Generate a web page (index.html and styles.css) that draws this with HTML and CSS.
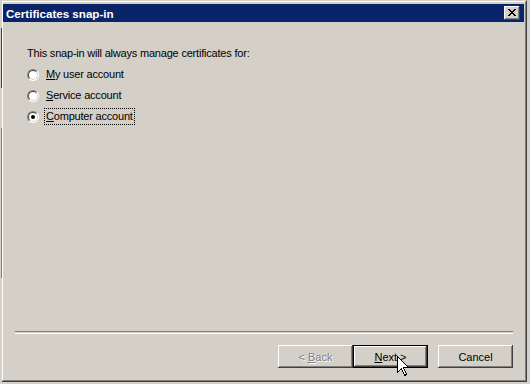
FILE: index.html
```html
<!DOCTYPE html>
<html>
<head>
<meta charset="utf-8">
<link rel="stylesheet" href="styles.css">
</head>
<body>
<div class="backdrop-edge">
  <div class="edge-line edge-a"></div>
  <div class="edge-line edge-b"></div>
  <div class="edge-line edge-c"></div>
</div>
<div class="window">
  <div class="frame">
    <div class="titlebar">
      <span class="title">Certificates snap-in</span>
      <button class="close" aria-label="Close">
        <svg width="8" height="7" viewBox="0 0 8 7" shape-rendering="crispEdges">
          <path d="M0 0h2v1h-2zM6 0h2v1h-2zM1 1h2v1h-2zM5 1h2v1h-2zM2 2h4v1h-4zM3 3h2v1h-2zM2 4h4v1h-4zM1 5h2v1h-2zM5 5h2v1h-2zM0 6h2v1h-2zM6 6h2v1h-2z" fill="#000"/>
        </svg>
      </button>
    </div>
    <div class="content">
      <div class="intro">This snap-in will always manage certificates for:</div>
      <div class="option">
        <span class="radio"></span>
        <span class="label"><u>M</u>y user account</span>
      </div>
      <div class="option">
        <span class="radio"></span>
        <span class="label"><u>S</u>ervice account</span>
      </div>
      <div class="option">
        <span class="radio checked"></span>
        <span class="label focused"><u>C</u>omputer account</span>
      </div>
    </div>
    <div class="separator"></div>
    <div class="buttons">
      <button class="btn disabled">&lt; <u>B</u>ack</button>
      <button class="btn default"><u>N</u>ext &gt;</button>
      <button class="btn cancel">Cancel</button>
    </div>
  </div>
</div>
<svg class="cursor" width="13" height="21" viewBox="0 0 13 21" shape-rendering="crispEdges">
  <path d="M0.5 0.5V16.5L4.5 12.5L7.5 19.5L9.5 18.5L6.5 11.5H11.5Z" fill="#fff" stroke="#000" stroke-width="1"/>
</svg>
</body>
</html>
```
FILE: styles.css
```css
html, body {
  margin: 0;
  padding: 0;
}
body {
  width: 530px;
  height: 384px;
  overflow: hidden;
  background: #d4d0c8;
  display: flex;
  align-items: flex-start;
  font-family: "Liberation Sans", Arial, sans-serif;
  font-size: 11px;
  color: #000;
  position: relative;
}
.backdrop-edge {
  width: 2px;
  height: 384px;
  display: flex;
  flex-direction: column;
}
.edge-line {
  width: 2px;
  border-right: 1px solid #404040;
  box-sizing: border-box;
}
.edge-a { height: 28px; margin-top: 0; border-color: transparent; }
.edge-b { height: 60px; border-right-color: #404040; }
.edge-c { height: 150px; margin-top: 40px; border-right-color: #808080; }
.window {
  width: 525px;
  height: 382px;
  box-sizing: border-box;
  border: 1px solid;
  border-color: #d4d0c8 #404040 #404040 #d4d0c8;
  border-left-width: 0;
}
.frame {
  height: 100%;
  box-sizing: border-box;
  border: 1px solid;
  border-color: #ffffff #808080 #808080 #ffffff;
  padding: 2px 1px 0 0;
  display: flex;
  flex-direction: column;
  background: #d4d0c8;
}
.titlebar {
  height: 18px;
  background: #0a246a;
  display: flex;
  align-items: center;
  justify-content: space-between;
  padding: 0 4px 0 3px;
}
.title {
  color: #fff;
  font-weight: bold;
  font-size: 11.6px;
  line-height: 13px;
}
.close {
  width: 16px;
  height: 14px;
  padding: 0;
  margin: 0;
  border: 0;
  background: #d4d0c8;
  box-shadow: inset -1px -1px 0 #404040, inset 1px 1px 0 #ffffff, inset -2px -2px 0 #808080, inset 2px 2px 0 #d4d0c8;
  display: flex;
  align-items: center;
  justify-content: center;
}
.close svg {
  display: block;
  margin: 0 1px 1px 0;
}
.content {
  flex: 1;
  padding: 25px 0 0 24px;
  letter-spacing: -0.2px;
}
.intro {
  line-height: 13px;
  margin-bottom: 4px;
}
.option {
  height: 21px;
  display: flex;
  align-items: center;
}
.radio {
  width: 12px;
  height: 12px;
  box-sizing: border-box;
  border-radius: 50%;
  border: 1px solid;
  border-color: #808080 #ffffff #ffffff #808080;
  position: relative;
  margin-right: 6px;
  background: #fff;
}
.radio::before {
  content: "";
  position: absolute;
  inset: 0;
  border-radius: 50%;
  border: 1px solid;
  border-color: #404040 #d4d0c8 #d4d0c8 #404040;
}
.radio.checked::after {
  content: "";
  position: absolute;
  left: 3px;
  top: 3px;
  width: 4px;
  height: 4px;
  border-radius: 50%;
  background: #000;
}
.label {
  line-height: 13px;
  padding: 1px 1px;
  border: 1px dotted transparent;
  margin-left: -1px;
}
.label.focused {
  border-color: #000;
}
.separator {
  height: 1px;
  border-top: 1px solid #808080;
  border-bottom: 1px solid #ffffff;
  margin: 0 11px 0 12px;
}
.buttons {
  display: flex;
  justify-content: flex-end;
  padding: 11px 11px 12px 0;
}
.btn {
  width: 75px;
  height: 23px;
  box-sizing: border-box;
  margin: 0;
  padding: 0;
  border: 0;
  background: #d4d0c8;
  font-family: "Liberation Sans", Arial, sans-serif;
  font-size: 11px;
  color: #000;
  box-shadow: inset -1px -1px 0 #404040, inset 1px 1px 0 #ffffff, inset -2px -2px 0 #808080, inset 2px 2px 0 #d4d0c8;
}
.btn.disabled {
  color: #808080;
  text-shadow: 1px 1px 0 #ffffff;
}
.btn.default {
  box-shadow: inset 0 0 0 1px #000, inset -2px -2px 0 #404040, inset 2px 2px 0 #ffffff, inset -3px -3px 0 #808080;
}
.btn.cancel {
  margin-left: 10px;
}
.cursor {
  position: absolute;
  left: 397px;
  top: 356px;
}
```
